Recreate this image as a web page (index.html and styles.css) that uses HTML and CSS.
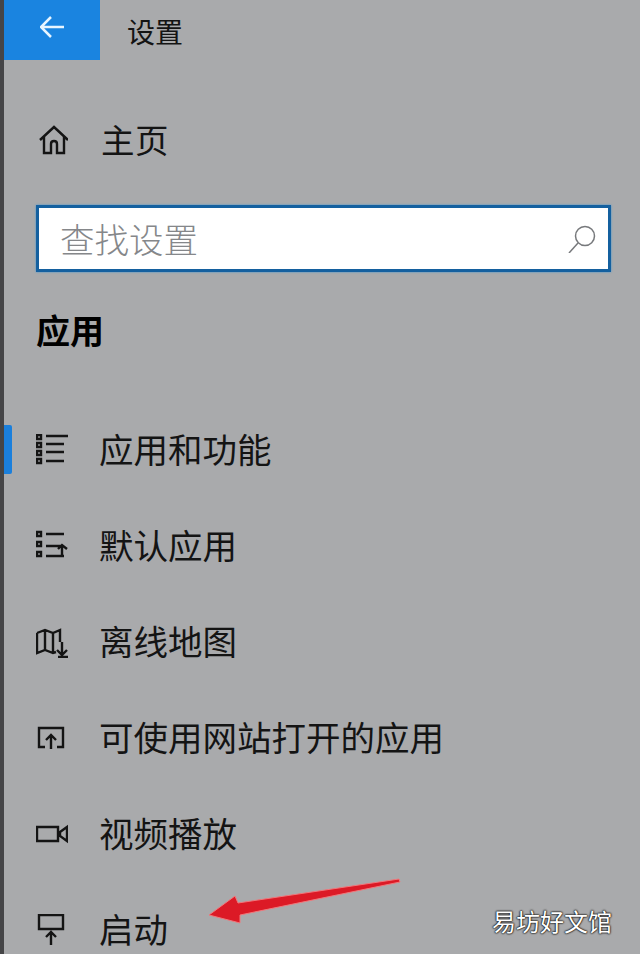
FILE: index.html
```html
<!DOCTYPE html>
<html lang="zh">
<head>
    <meta charset="utf-8">
    <title>设置</title>
    <link rel="stylesheet" href="styles.css">
</head>
<body>

<div class="top">
    <div class="back">
        <svg width="24" height="22" viewBox="0 0 24 22"><path d="M11 1 1 11l10 10M1 11h23"/></svg>
    </div>
    <div class="title">设置</div>
</div>

<div class="home">
    <svg class="icon" width="32" height="32" viewBox="0 0 32 32"><path d="M4 16 18 3l14 13M8 13v16h7v-9q0-3 3-3t3 3v9h7V13"/></svg>
    <span>主页</span>
</div>

<div class="search">
    <span>查找设置</span>
    <svg width="28" height="28" viewBox="0 0 28 28"><circle cx="17" cy="11" r="9.5"/><path d="M10 18 1 28"/></svg>
</div>

<h2>应用</h2>

<ul class="menu">
    <li class="active">
        <svg class="icon" width="32" height="32" viewBox="0 0 32 32"><path d="M1 1h4v4H1zM1 9h4v4H1zM1 17h4v4H1zM1 25h4v4H1z"/><path d="M10 2h22M10 10h18M10 18h18M10 27h18"/></svg>
        <span>应用和功能</span>
    </li>
    <li>
        <svg class="icon" width="32" height="32" viewBox="0 0 32 32"><path d="M1 2h4v4H1zM1 12h4v4H1zM1 22h4v4H1z"/><path d="M10 4h18M10 16h16M10 26h18M26 26V15M22 19l4-4 5 4"/></svg>
        <span>默认应用</span>
    </li>
    <li>
        <svg class="icon" width="32" height="32" viewBox="0 0 32 32"><path d="M1 7l8-3 8 3 7-3v12M1 7v20l8-3 8 3 3-1M9 4v20M17 7v20M26 16v12M21 24l5 5 5-5M22 31h10"/></svg>
        <span>离线地图</span>
    </li>
    <li>
        <svg class="icon" width="32" height="32" viewBox="0 0 32 32"><path d="M9 25H3V6h24v19h-6M15 27V14M10 18l5-5 5 5"/></svg>
        <span>可使用网站打开的应用</span>
    </li>
    <li>
        <svg class="icon" width="32" height="32" viewBox="0 0 32 32"><path d="M1 9h21v14H1zM24 14l7-5v14l-7-5z"/></svg>
        <span>视频播放</span>
    </li>
    <li>
        <svg class="icon" width="32" height="32" viewBox="0 0 32 32"><path d="M3 1h24v14H3zM15 31V19M10 23l5-5 5 5"/></svg>
        <span>启动</span>
    </li>
</ul>

<svg class="arrow" width="200" height="52" viewBox="0 0 200 52"><path d="M5 37 31 18 34 25 195 1 196 4 36 37 36 45z"/></svg>
<div class="mark">易坊好文馆</div>

</body>
</html>
```

FILE: styles.css
```css
html, body {
    height: 954px;
    overflow: hidden;
}

body {
    position: relative;
    margin: 0;
    border-left: 4px solid #454547;
    background: #a9aaac;
    color: #141414;
    font-family: "Noto Sans CJK SC", "Noto Sans", sans-serif;
}

svg {
    display: block;
    fill: none;
    stroke: #141414;
    stroke-width: 2.4;
}

.top {
    display: flex;
    align-items: center;
    height: 60px;
}

.back {
    display: flex;
    align-items: center;
    justify-content: center;
    box-sizing: border-box;
    width: 96px;
    height: 60px;
    padding-bottom: 6px;
    background: #1a84e0;
}

.back svg {
    stroke: #e8f5ff;
    stroke-width: 2.5;
}

.title {
    margin-left: 27px;
    padding-top: 2px;
    font-size: 28px;
}

.home {
    display: flex;
    align-items: center;
    height: 60px;
    margin-top: 50px;
    padding-left: 32px;
    font-size: 33.5px;
}

.home span {
    margin-left: 33px;
    padding-bottom: 4px;
    letter-spacing: .5px;
}

.search {
    display: flex;
    align-items: center;
    justify-content: space-between;
    box-sizing: border-box;
    width: 575px;
    height: 67px;
    margin: 35px 0 0 32px;
    padding: 0 12px 0 21px;
    border: 3px solid #14609f;
    background: #fff;
    box-shadow: 0 0 2px #3f95d6;
    color: #85878a;
    font-size: 34.5px;
    font-weight: 300;
}

.search span {
    padding-bottom: 2px;
}

.search svg {
    stroke: #77797c;
    stroke-width: 1.5;
}

h2 {
    height: 40px;
    margin: 38px 0 0 32px;
    font-size: 34px;
    font-weight: 700;
    line-height: 40px;
    color: #000;
}

.menu {
    margin: 52px 0 0;
    padding: 0;
    list-style: none;
}

.menu li {
    position: relative;
    display: flex;
    align-items: center;
    gap: 31px;
    height: 96px;
    padding-left: 32px;
    font-size: 34.5px;
}

.menu li span {
    padding-bottom: 4px;
}

.menu .active::before {
    content: "";
    position: absolute;
    left: 0;
    top: 23px;
    width: 8px;
    height: 49px;
    border-radius: 0 2px 2px 0;
    background: #1a7fdc;
}

.arrow {
    position: absolute;
    left: 200px;
    top: 878px;
    stroke: #f0787c;
    stroke-width: 1;
    fill: #dc1a26;
}

.mark {
    position: absolute;
    right: 28px;
    top: 904px;
    color: #fff;
    font-size: 24px;
    line-height: 34px;
    text-shadow: 0 0 1px #111, 0 0 2px #111, 0 0 2px #111;
}
```
